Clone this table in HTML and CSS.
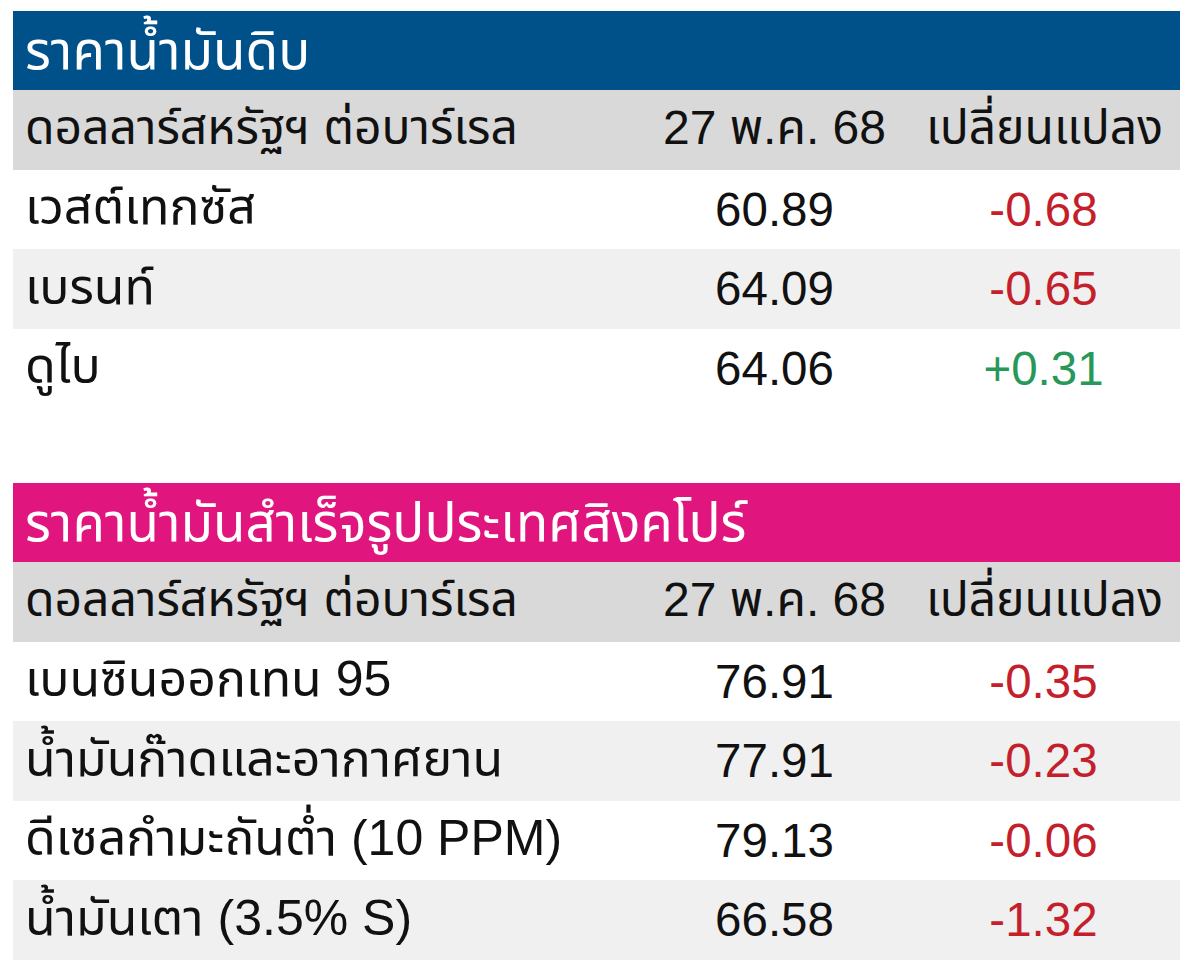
FILE: index.html
```html
<!DOCTYPE html>
<html lang="th">
<head>
<meta charset="utf-8">
<title>ราคาน้ำมัน</title>
<link rel="stylesheet" href="styles.css">
</head>
<body>
<div class="page">
  <section class="panel">
    <div class="title title-blue">ราคาน้ำมันดิบ</div>
    <table class="prices">
      <colgroup><col class="c1"><col class="c2"><col class="c3"></colgroup>
      <thead>
        <tr><th class="name">ดอลลาร์สหรัฐฯ ต่อบาร์เรล</th><th class="val">27 พ.ค. 68</th><th class="chg">เปลี่ยนแปลง</th></tr>
      </thead>
      <tbody>
        <tr><td class="name">เวสต์เทกซัส</td><td class="val">60.89</td><td class="chg neg">-0.68</td></tr>
        <tr><td class="name">เบรนท์</td><td class="val">64.09</td><td class="chg neg">-0.65</td></tr>
        <tr><td class="name">ดูไบ</td><td class="val">64.06</td><td class="chg pos">+0.31</td></tr>
      </tbody>
    </table>
  </section>
  <section class="panel">
    <div class="title title-pink">ราคาน้ำมันสำเร็จรูปประเทศสิงคโปร์</div>
    <table class="prices">
      <colgroup><col class="c1"><col class="c2"><col class="c3"></colgroup>
      <thead>
        <tr><th class="name">ดอลลาร์สหรัฐฯ ต่อบาร์เรล</th><th class="val">27 พ.ค. 68</th><th class="chg">เปลี่ยนแปลง</th></tr>
      </thead>
      <tbody>
        <tr><td class="name">เบนซินออกเทน 95</td><td class="val">76.91</td><td class="chg neg">-0.35</td></tr>
        <tr><td class="name">น้ำมันก๊าดและอากาศยาน</td><td class="val">77.91</td><td class="chg neg">-0.23</td></tr>
        <tr><td class="name">ดีเซลกำมะถันต่ำ (10 PPM)</td><td class="val">79.13</td><td class="chg neg">-0.06</td></tr>
        <tr><td class="name">น้ำมันเตา (3.5% S)</td><td class="val">66.58</td><td class="chg neg">-1.32</td></tr>
      </tbody>
    </table>
  </section>
</div>
</body>
</html>
```
FILE: styles.css
```css
html, body {
  margin: 0;
  padding: 0;
  background: #ffffff;
}
body {
  font-family: "Liberation Sans", "Noto Sans Thai", "Loma", "Garuda", "Tahoma", sans-serif;
  color: #111111;
}
.page {
  padding: 11px 20px 0 13px;
  display: flex;
  flex-direction: column;
  gap: 75px;
  width: 1167px;
}
.panel {
  display: flex;
  flex-direction: column;
}
.title {
  height: 79px;
  line-height: 79px;
  padding-left: 12px;
  font-size: 53px;
  color: #ffffff;
  white-space: nowrap;
}
.title-blue { background: #00508a; }
.title-pink { background: #e0167e; }
.prices {
  border-collapse: collapse;
  table-layout: fixed;
  width: 1167px;
}
.c1 { width: 639px; }
.c2 { width: 245px; }
.c3 { width: 283px; }
.prices th, .prices td {
  height: 79.5px;
  padding: 0;
  font-size: 47.5px;
  font-weight: normal;
  white-space: nowrap;
  vertical-align: middle;
}
.prices th { font-size: 48px; }
.prices td.name { font-size: 50px; }
.prices thead tr { background: #d9d9d9; }
.prices tbody tr:nth-child(even) { background: #f0f0f0; }
.prices tbody tr:nth-child(odd) { background: #ffffff; }
.prices .name { text-align: left; padding-left: 12px; }
.prices .val { text-align: center; }
.prices .chg { text-align: center; padding-left: 10px; }
.prices th.chg { padding-left: 12px; }
.prices .neg { color: #c4202b; }
.prices .pos { color: #27985a; }
```
